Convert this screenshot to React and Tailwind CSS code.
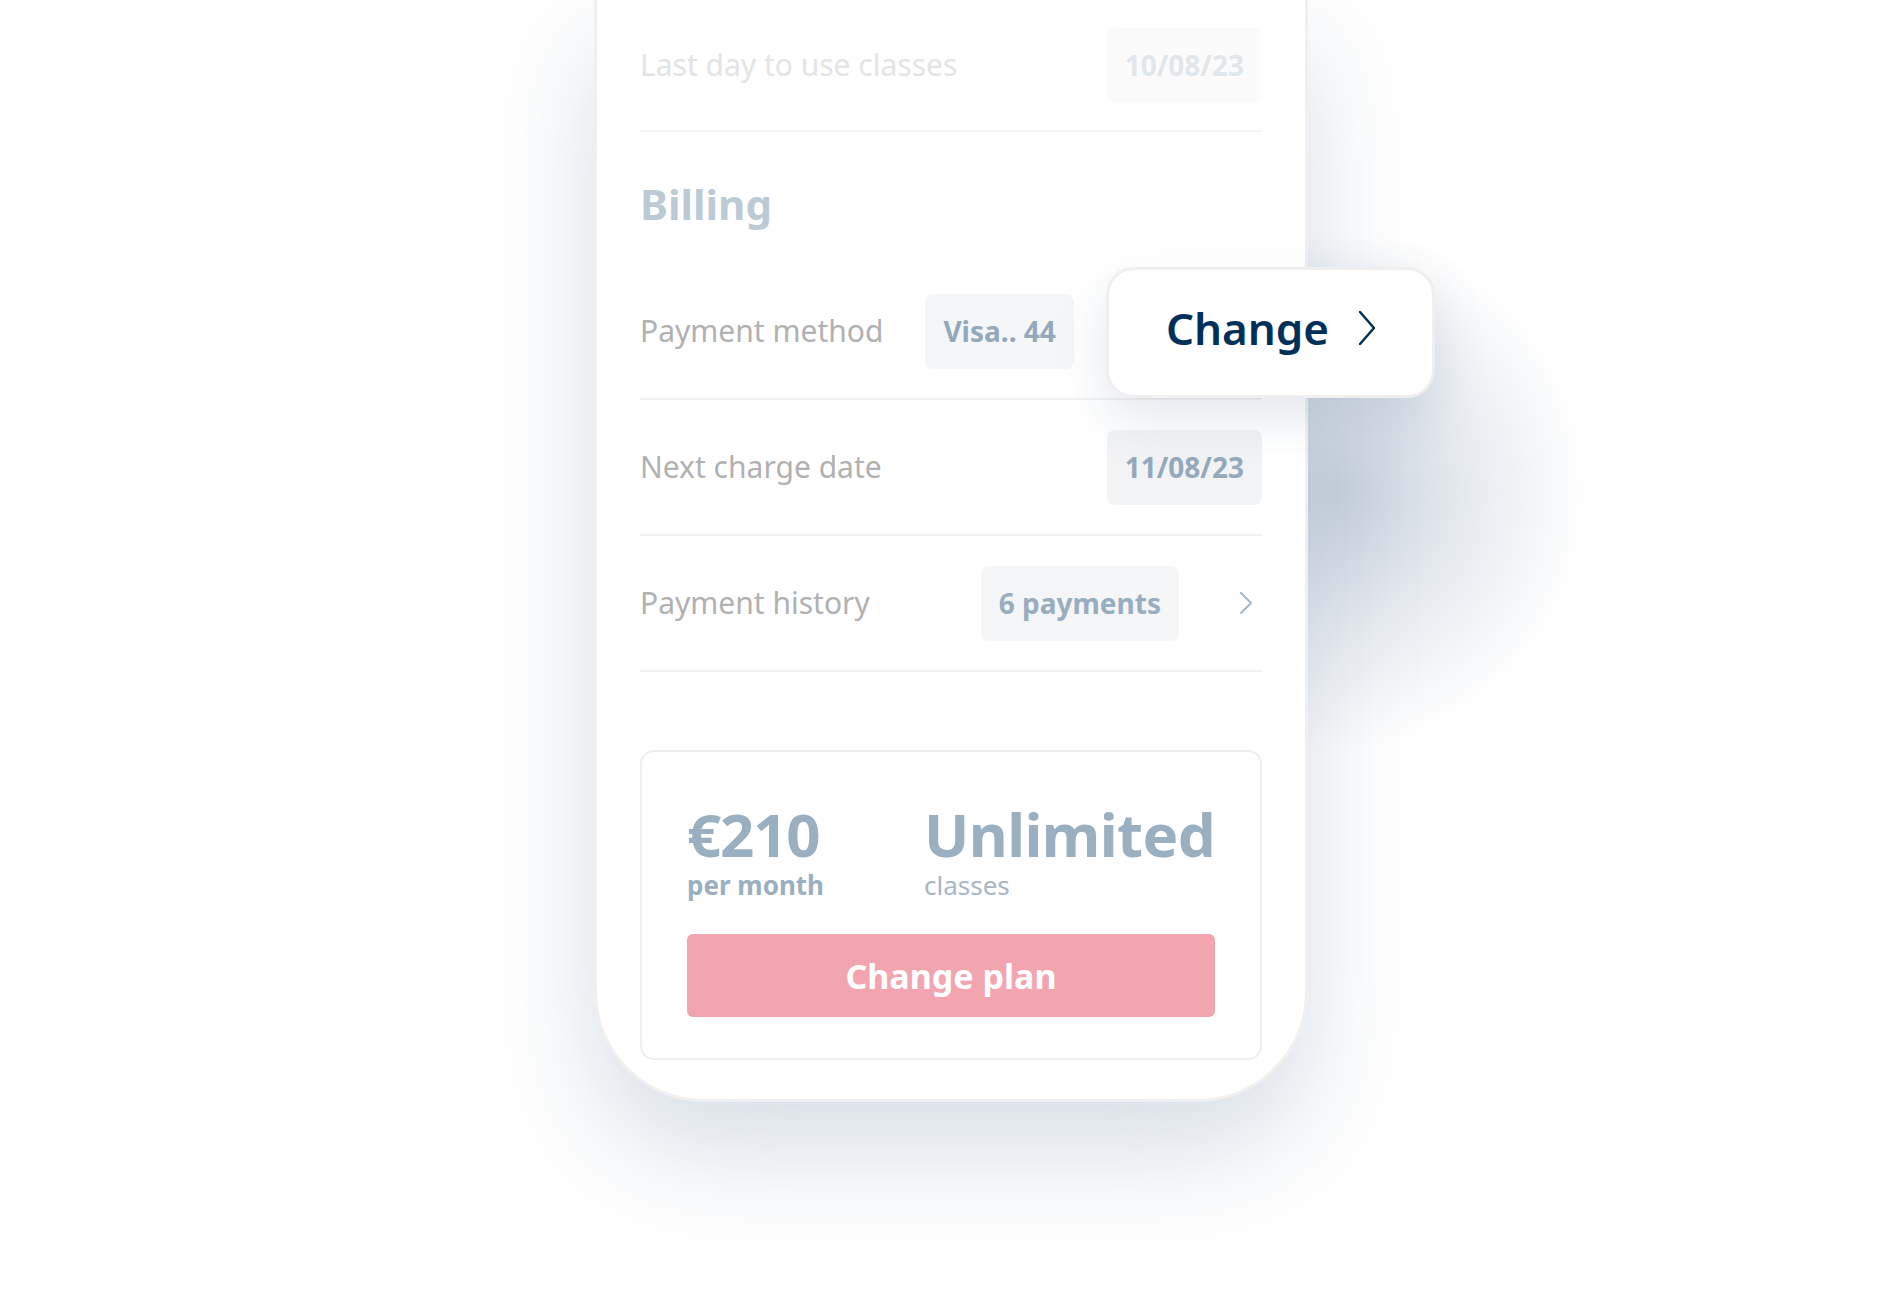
const FONT = "font-['Noto_Sans','Open_Sans',sans-serif]"

function Pill({ children, className = '' }) {
  return (
    <span
      className={`flex h-[75px] items-center rounded-lg px-[18px] text-[28px] font-bold leading-none ${className}`}
    >
      {children}
    </span>
  )
}

function Chevron({ className = '', color = '#a5b6c5', w = 12, h = 22, stroke = 2 }) {
  return (
    <svg width={w} height={h} viewBox={`0 0 ${w} ${h}`} fill="none" className={className}>
      <polyline
        points={`1,1 ${w - 1},${h / 2} 1,${h - 1}`}
        stroke={color}
        strokeWidth={stroke}
        strokeLinecap="round"
        strokeLinejoin="round"
      />
    </svg>
  )
}

export default function App() {
  return (
    <div className={`relative h-[1300px] w-[1901px] overflow-hidden bg-white ${FONT}`}>
      {/* soft glow cast by the floating button onto the page */}
      <div className="absolute left-[1090px] top-[230px] z-0 h-[520px] w-[500px] bg-[radial-gradient(closest-side,rgba(130,152,178,0.45),rgba(130,152,178,0.18)_55%,rgba(130,152,178,0))]" />

      <div className="relative z-10 ml-[594px] w-[714px] rounded-b-[110px] border-x-[3px] border-b-[3px] border-[#f0f0f0] bg-white px-[43px] pb-[39px] shadow-[0_50px_110px_rgba(110,135,165,0.28)]">
        <div className="flex h-[132px] items-center justify-between border-b-2 border-[#f6f6f6]">
          <span className="text-[30px] leading-none text-[#e2e4e6]">Last day to use classes</span>
          <Pill className="bg-[#fbfbfc] text-[#e1e6ea]">10/08/23</Pill>
        </div>

        <div className="pb-[39px] pt-[51px]">
          <h2 className="text-[42px] font-bold leading-none text-[#bccad6]">Billing</h2>
        </div>

        <div className="flex h-[136px] items-center border-b-2 border-[#f2f2f2]">
          <span className="text-[30px] leading-none text-[#b1b1b1]">Payment method</span>
          <Pill className="ml-[42px] bg-[#f5f6f7] text-[#94a9bb]">Visa.. 44</Pill>
        </div>

        <div className="flex h-[136px] items-center justify-between border-b-2 border-[#f2f2f2]">
          <span className="text-[30px] leading-none text-[#b1b1b1]">Next charge date</span>
          <Pill className="bg-[#f1f3f5] text-[#94a9bb]">11/08/23</Pill>
        </div>

        <div className="flex h-[136px] items-center border-b-2 border-[#f2f2f2]">
          <span className="text-[30px] leading-none text-[#b1b1b1]">Payment history</span>
          <Pill className="ml-auto bg-[#f5f6f7] text-[#98adbf]">6 payments</Pill>
          <Chevron className="ml-[61px] mr-[10px]" />
        </div>

        <div className="mt-[78px] rounded-[14px] border-2 border-[#eeeeee] px-[45px] pb-[41px] pt-[52px]">
          <div className="flex">
            <div className="w-[246px]">
              <div className="text-[60px] font-bold leading-none tracking-[-0.02em] text-[#9aafbf]">€210</div>
              <div className="mt-[8px] text-[26px] font-bold leading-none text-[#9aafbf]">per month</div>
            </div>
            <div>
              <div className="text-[60px] font-bold leading-none tracking-[-0.01em] text-[#9aafbf]">Unlimited</div>
              <div className="mt-[8px] text-[26px] leading-none text-[#a6b6c4]">classes</div>
            </div>
          </div>
          <button className="mt-[36px] flex h-[83px] w-full items-center justify-center rounded-[6px] bg-[#f2a5ae] text-[34px] font-bold leading-none text-white">
            Change plan
          </button>
        </div>
      </div>

      {/* floating "Change" button over the phone */}
      <div className="absolute left-[1106px] top-[267px] z-20 flex h-[131px] w-[329px] items-center justify-center gap-[30px] rounded-[28px] border-[3px] border-[#efefef] bg-white pb-[10px] shadow-[0_20px_50px_rgba(80,110,140,0.16)]">
        <span className="text-[44px] font-semibold leading-none text-[#003057]">Change</span>
        <Chevron color="#003057" w={16} h={34} stroke={2.5} />
      </div>
    </div>
  )
}
